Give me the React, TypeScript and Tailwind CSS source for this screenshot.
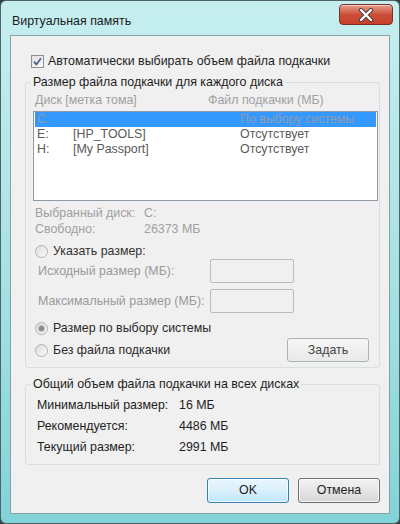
import React from 'react';

function CheckBox() {
  return (
    <span className="w-[13px] h-[13px] shrink-0 border border-[#8e8f8f] bg-linear-to-br from-[#dedede] to-[#fbfbfb] flex items-center justify-center">
      <svg width="9" height="9" viewBox="0 0 9 9">
        <path d="M1 4.6 L3.4 7.4 L8 1.2" stroke="#4a5d86" strokeWidth="1.7" fill="none" />
      </svg>
    </span>
  );
}

function Radio({ checked }: { checked?: boolean }) {
  return (
    <span className="w-[13px] h-[13px] shrink-0 rounded-full border border-[#b0b0b0] bg-linear-to-br from-[#dcdcdc] to-[#fbfbfb] flex items-center justify-center">
      {checked && <span className="w-[5px] h-[5px] rounded-full bg-[#8c8c8c] ring-1 ring-[#bdbdbd]" />}
    </span>
  );
}

const drives = [
  { disk: 'C:', label: '', size: 'По выбору системы', selected: true },
  { disk: 'E:', label: '[HP_TOOLS]', size: 'Отсутствует' },
  { disk: 'H:', label: '[My Passport]', size: 'Отсутствует' },
];

const totals = [
  ['Минимальный размер:', '16 МБ'],
  ['Рекомендуется:', '4486 МБ'],
  ['Текущий размер:', '2991 МБ'],
];

export default function App() {
  return (
    <div className="w-[400px] h-[524px] bg-[#33403f] text-[12.4px] font-['Liberation_Sans',Arial,sans-serif]">
      <div className="w-full h-full rounded-[6px] border border-[#4d6366] bg-linear-to-b from-[#c6eeef] via-[#a9e2e4] to-[#82d3d8] flex flex-col">
        {/* title bar */}
        <div className="h-[34px] flex items-start justify-between">
          <span className="mt-[12px] ml-[11px] leading-[16px] text-[#1c1c1c]">Виртуальная память</span>
          <div className="mt-[3px] mr-[6px] w-[54px] h-[21px] rounded-[4px] border border-[#7a2f28] bg-linear-to-b from-[#e59e8c] via-[#cc4f3b] to-[#c63f29] flex items-center justify-center shadow-[inset_0_1px_0_rgba(255,255,255,0.5)]">
            <svg width="16" height="14" viewBox="0 0 16 14">
              <path d="M3 2 L13 12 M13 2 L3 12" stroke="#4a3a3a" strokeWidth="4.2" strokeLinecap="round" />
              <path d="M3 2 L13 12 M13 2 L3 12" stroke="#ffffff" strokeWidth="2.4" strokeLinecap="round" />
            </svg>
          </div>
        </div>

        {/* client area */}
        <div className="mx-[9px] flex-1 border border-[#87a0a4] bg-[#f0f0f0] flex flex-col">
          <div className="mt-[17px] ml-[20px] h-[16px] flex items-center gap-[4px] text-[#1e1e1e]">
            <CheckBox />
            <span className="leading-[16px]">Автоматически выбирать объем файла подкачки</span>
          </div>

          <fieldset className="mt-[5px] ml-[14px] w-[355px] border border-[#d5dfe5] rounded-[3px] pb-[5px]">
            <legend className="ml-[5px] px-[2px] leading-[16px] text-[#1e1e1e]">Размер файла подкачки для каждого диска</legend>
            <div className="mt-[3px] pl-[9px] flex leading-[15px] text-[#a0a0a0]">
              <span className="w-[173px]">Диск [метка тома]</span>
              <span>Файл подкачки (МБ)</span>
            </div>
            <div className="mt-[3px] ml-[7px] w-[345px] h-[90px] border border-[#8e9aa6] bg-white">
              {drives.map((d) => (
                <div
                  key={d.disk}
                  className={
                    d.selected
                      ? 'mx-[1px] h-[15px] flex items-center leading-[15px] bg-[#3399ff] text-[#8e9bab]'
                      : 'mx-[1px] h-[15px] flex items-center leading-[15px] text-[#5a5a5a]'
                  }
                >
                  <span className="ml-[2px] w-[36px]">{d.disk}</span>
                  <span className="w-[167px]">{d.label}</span>
                  <span>{d.size}</span>
                </div>
              ))}
            </div>

            <div className="mt-[4px] pl-[9px] text-[#a0a0a0] leading-[16px]">
              <div className="flex">
                <span className="w-[109px]">Выбранный диск:</span>
                <span>C:</span>
              </div>
              <div className="flex">
                <span className="w-[109px]">Свободно:</span>
                <span>26373 МБ</span>
              </div>
            </div>

            <div className="mt-[6px] pl-[9px] h-[16px] flex items-center gap-[5px] text-[#333]">
              <Radio />
              <span className="leading-[16px]">Указать размер:</span>
            </div>
            <div className="pl-[12px] h-[24px] flex items-center text-[#9a9a9a]">
              <span className="w-[172px]">Исходный размер (МБ):</span>
              <span className="w-[84px] h-[24px] rounded-[2px] border border-[#bababa]" />
            </div>
            <div className="mt-[6px] pl-[12px] h-[24px] flex items-center text-[#9a9a9a]">
              <span className="w-[172px]">Максимальный размер (МБ):</span>
              <span className="w-[84px] h-[24px] rounded-[2px] border border-[#bababa]" />
            </div>

            <div className="mt-[7px] pl-[9px] h-[16px] flex items-center gap-[5px] text-[#2a2a2a]">
              <Radio checked />
              <span className="leading-[16px]">Размер по выбору системы</span>
            </div>
            <div className="mt-[2px] pl-[9px] pr-[10px] h-[24px] flex items-center gap-[5px] text-[#2a2a2a]">
              <Radio />
              <span className="leading-[16px] flex-1">Без файла подкачки</span>
              <span className="w-[82px] h-[24px] rounded-[3px] border border-[#adb2b5] bg-linear-to-b from-[#f6f6f6] to-[#e9e9e9] flex items-center justify-center text-[#444]">
                Задать
              </span>
            </div>
          </fieldset>

          <fieldset className="mt-[8px] ml-[14px] w-[355px] border border-[#d5dfe5] rounded-[3px] pb-[6px]">
            <legend className="ml-[5px] px-[2px] leading-[16px] text-[#1e1e1e]">Общий объем файла подкачки на всех дисках</legend>
            <div className="mt-[3px] pl-[11px] text-[#1e1e1e]">
              {totals.map(([k, v]) => (
                <div key={k} className="h-[21px] flex items-center">
                  <span className="w-[142px]">{k}</span>
                  <span>{v}</span>
                </div>
              ))}
            </div>
          </fieldset>

          <div className="mt-[13px] ml-[196px] flex gap-[9px] text-[#1e1e1e]">
            <button className="w-[82px] h-[25px] rounded-[3px] border border-[#3c7fb1] bg-linear-to-b from-[#eaf6fd] via-[#d9f0fc] to-[#bee6fd] shadow-[inset_0_0_0_1px_rgba(255,255,255,0.7)] flex items-center justify-center">
              OK
            </button>
            <button className="w-[82px] h-[25px] rounded-[3px] border border-[#707070] bg-linear-to-b from-[#f2f2f2] via-[#e6e6e6] to-[#d6d6d6] shadow-[inset_0_0_0_1px_rgba(255,255,255,0.7)] flex items-center justify-center">
              Отмена
            </button>
          </div>
        </div>
        <div className="h-[9px]" />
      </div>
    </div>
  );
}
